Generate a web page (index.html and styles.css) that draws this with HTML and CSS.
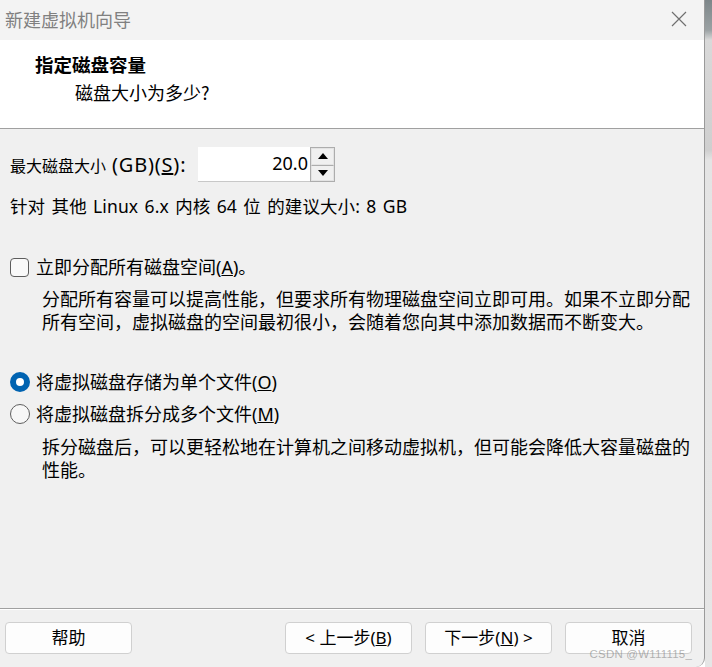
FILE: index.html
```html
<!DOCTYPE html>
<html lang="zh-CN">
<head>
<meta charset="utf-8">
<title>新建虚拟机向导</title>
<link rel="stylesheet" href="styles.css">
</head>
<body>
<div class="screen">
  <div class="window">
    <div class="titlebar">
      <span class="title">新建虚拟机向导</span>
      <svg class="close" width="18" height="18" viewBox="0 0 18 18"><path d="M2 2 L16 16 M16 2 L2 16" stroke="#6f6f6f" stroke-width="1.2" fill="none"/></svg>
    </div>
    <div class="header">
      <div class="h-title">指定磁盘容量</div>
      <div class="h-sub">磁盘大小为多少?</div>
    </div>
    <div class="content">
      <div class="size-row">
        <span class="size-label"><span class="cjk16">最大磁盘大小</span> (GB)(<u>S</u>):</span>
        <div class="spin">
          <div class="spin-value">20.0</div>
          <div class="spin-btns">
            <div class="spin-btn"><svg width="10" height="6" viewBox="0 0 10 6"><path d="M5 0 L10 6 L0 6 Z" fill="#000"/></svg></div>
            <div class="spin-btn"><svg width="10" height="6" viewBox="0 0 10 6"><path d="M0 0 L10 0 L5 6 Z" fill="#000"/></svg></div>
          </div>
        </div>
      </div>
      <div class="rec">针对 其他 Linux 6.x 内核 64 位 的建议大小: 8 GB</div>

      <div class="opt opt-check">
        <span class="checkbox"></span>
        <span class="opt-label">立即分配所有磁盘空间(<u>A</u>)。</span>
      </div>
      <p class="desc">分配所有容量可以提高性能，但要求所有物理磁盘空间立即可用。如果不立即分配所有空间，虚拟磁盘的空间最初很小，会随着您向其中添加数据而不断变大。</p>

      <div class="opt opt-radio1">
        <span class="radio radio-on"></span>
        <span class="opt-label">将虚拟磁盘存储为单个文件(<u>O</u>)</span>
      </div>
      <div class="opt opt-radio2">
        <span class="radio"></span>
        <span class="opt-label">将虚拟磁盘拆分成多个文件(<u>M</u>)</span>
      </div>
      <p class="desc desc2">拆分磁盘后，可以更轻松地在计算机之间移动虚拟机，但可能会降低大容量磁盘的性能。</p>
    </div>
    <div class="footer">
      <button class="btn">帮助</button>
      <div class="btn-group">
        <button class="btn">&lt; 上一步(<u>B</u>)</button>
        <button class="btn">下一步(<u>N</u>) &gt;</button>
        <button class="btn">取消</button>
      </div>
    </div>
    <div class="watermark">CSDN @W111115_</div>
  </div>
  <div class="side"></div>
</div>
</body>
</html>
```
FILE: styles.css
```css
* { box-sizing: border-box; }
html, body { margin: 0; padding: 0; }
body {
  width: 712px;
  height: 667px;
  overflow: hidden;
  font-family: "Noto Sans", "Noto Sans CJK SC", sans-serif;
  color: #000;
}
.screen {
  display: flex;
  width: 712px;
  height: 667px;
}
.window {
  position: relative;
  width: 705px;
  height: 667px;
  background: #f0f0f0;
  border-right: 1px solid #9a9a9a;
  border-bottom-right-radius: 9px;
  display: flex;
  flex-direction: column;
  overflow: hidden;
}
.side {
  flex: 1;
  background: linear-gradient(#7d8689 0px, #9aa1a3 30px, #d9d9d9 40px, #cfcfcf 150px, #e4e4e4 160px, #e6e6e6 667px);
}
.titlebar {
  height: 40px;
  background: #f3f3f3;
  display: flex;
  align-items: center;
  justify-content: space-between;
  padding: 0 16px 2px 5px;
}
.title {
  font-size: 18px;
  color: #808080;
  font-family: "Noto Sans CJK SC", sans-serif;
}
.close { display: block; }
.header {
  height: 89px;
  background: #fff;
  border-bottom: 1px solid #a0a0a0;
  padding: 11px 0 0 35px;
}
.h-title {
  font-size: 18.5px;
  font-weight: bold;
  line-height: 26px;
  font-family: "Noto Sans CJK SC", sans-serif;
}
.h-sub {
  font-size: 18px;
  line-height: 26px;
  margin-left: 40px;
  margin-top: 2px;
  font-family: "Noto Sans CJK SC", sans-serif;
}
.content {
  flex: 1;
  padding: 18px 0 0 10px;
  display: flex;
  flex-direction: column;
}
.size-row {
  display: flex;
  align-items: center;
  height: 35px;
}
.size-label {
  font-size: 20px;
  letter-spacing: 0.8px;
  width: 188px;
  white-space: nowrap;
}
.cjk16 { font-size: 16px; letter-spacing: 0; font-family: "Noto Sans CJK SC", sans-serif; }
.spin {
  display: flex;
  height: 35px;
}
.spin-value {
  width: 112px;
  background: #fff;
  border-bottom: 1px solid #c8c8c8;
  text-align: right;
  font-size: 18px;
  line-height: 33px;
  padding-right: 2px;
}
.spin-btns {
  width: 25px;
  border: 1px solid #adadad;
  display: flex;
  flex-direction: column;
}
.spin-btn {
  flex: 1;
  display: flex;
  align-items: center;
  justify-content: center;
  background: #f0f0f0;
  border: 1px solid #e3e3e3;
}
.spin-btn + .spin-btn { border-top: 1px solid #adadad; }
.spin-btn svg { display: block; }
.rec {
  margin-top: 12px;
  font-size: 17.5px;
  word-spacing: 1.7px;
  letter-spacing: 0.1px;
  line-height: 24px;
  white-space: nowrap;
}
.opt {
  display: flex;
  align-items: center;
  height: 24px;
}
.opt-check { margin-top: 37px; }
.opt-radio1 { margin-top: 37px; }
.opt-radio2 { margin-top: 8px; }
.opt-label {
  font-size: 18px;
  font-family: "Noto Sans", "Noto Sans CJK SC", sans-serif;
  line-height: 24px;
}
.opt-check .opt-label { margin-left: 7px; }
.opt-radio1 .opt-label, .opt-radio2 .opt-label { margin-left: 6px; }
.checkbox {
  width: 19px;
  height: 19px;
  border: 1px solid #5d5d5d;
  border-radius: 4px;
  background: #f9f9f9;
}
.radio {
  width: 20px;
  height: 20px;
  border-radius: 50%;
  border: 1px solid #5f5f5f;
  background: #f7f7f7;
}
.radio-on {
  border: 6px solid #0063b1;
  background: #fff;
}
.desc {
  margin: 8px 0 0 32px;
  width: 660px;
  font-size: 18px;
  line-height: 23px;
  font-family: "Noto Sans CJK SC", sans-serif;
}
.desc2 { margin-top: 9px; }
.footer {
  height: 59px;
  border-top: 1px solid #a0a0a0;
  box-shadow: inset 0 1px 0 #fff;
  display: flex;
  justify-content: space-between;
  padding: 13px 12px 0 5px;
}
.btn-group {
  display: flex;
  gap: 13px;
}
.btn {
  width: 127px;
  height: 32px;
  background: #fdfdfd;
  border: 1px solid #d0d0d0;
  border-radius: 4px;
  font-family: "Noto Sans", "Noto Sans CJK SC", sans-serif;
  font-size: 17px;
  color: #000;
  padding: 0;
  line-height: 28px;
}
.watermark {
  position: absolute;
  right: 12px;
  bottom: 7px;
  font-family: "Liberation Sans", sans-serif;
  font-size: 11.5px;
  color: rgba(120,120,120,0.55);
  letter-spacing: 0.2px;
}
```
